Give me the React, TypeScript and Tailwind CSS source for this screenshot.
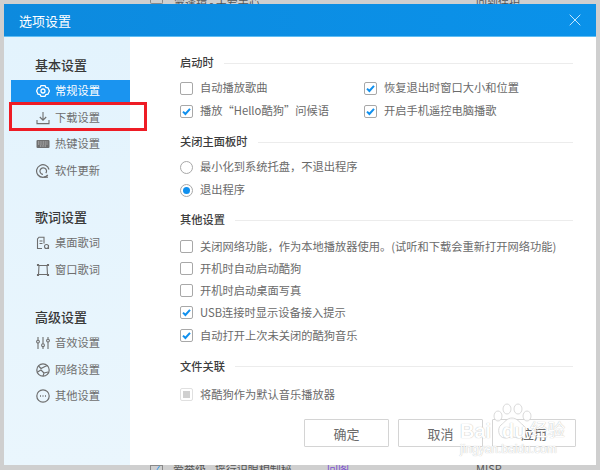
import React from "react";

const font = { fontFamily: '"Noto Sans CJK SC", "Noto Sans", sans-serif' };

function Check({ on, disabled }: { on?: boolean; disabled?: boolean }) {
  return (
    <span className={`flex h-[13px] w-[13px] shrink-0 items-center justify-center rounded-[2px] border bg-white ${disabled ? "border-[#e0e0e0]" : "border-[#a8a8a8]"}`}>
      {on && (
        <svg width="11" height="11" viewBox="0 0 11 11" fill="none">
          <path d="M2 5.6 4.4 8 9 2.8" stroke="#1090ee" strokeWidth="2" />
        </svg>
      )}
      {disabled && <span className="h-[7px] w-[7px] bg-[#d0d0d0]" />}
    </span>
  );
}

function Radio({ on }: { on?: boolean }) {
  return (
    <span className="flex h-[13px] w-[13px] shrink-0 items-center justify-center rounded-full border border-[#a8a8a8] bg-white">
      {on && <span className="h-[7px] w-[7px] rounded-full bg-[#1090ee]" />}
    </span>
  );
}

function Row({ box, label, h = "h-[22px]" }: { box: React.ReactNode; label: string; h?: string }) {
  return (
    <div className={`flex items-center gap-[7px] whitespace-nowrap ${h}`}>
      {box}
      <span className="text-[11.25px] leading-none text-[#6a6a6a]">{label}</span>
    </div>
  );
}

function Heading({ title, className = "" }: { title: string; className?: string }) {
  return (
    <div className={`flex h-[18px] items-center gap-[10px] ${className}`}>
      <span className="text-[11.25px] font-medium leading-none text-[#3d3d3d]">{title}</span>
      <span className="h-px flex-1 bg-[#ececec]" />
    </div>
  );
}

const stroke = { fill: "none", stroke: "currentColor", strokeWidth: 1.1 };

const icons: Record<string, React.ReactNode> = {
  gear: (
    <g {...stroke}>
      <path d="M5 1.6h4l.9 1.9 2.1.3 1.4 3.2-1.4 3.2-2.1.3-.9 1.9H5l-.9-1.9-2.1-.3L.6 7l1.4-3.2 2.1-.3z" strokeWidth="1.3" />
      <circle cx="7" cy="7" r="2" strokeWidth="1.3" />
    </g>
  ),
  download: (
    <g {...stroke}>
      <path d="M7 1v8M3.8 6 7 9.2 10.2 6M1 9v3.6h12V9" />
    </g>
  ),
  keyboard: (
    <g>
      <rect x="0.5" y="3" width="13" height="8" rx="1" fill="#6f6f6f" />
      <path d="M2 5h10M2 7h10M4 9h6" stroke="#d8d8d8" strokeWidth="0.8" strokeDasharray="1 .7" />
    </g>
  ),
  update: (
    <g {...stroke}>
      <path d="M11.8 11A6.3 6.3 0 1 1 13 5.5" strokeWidth="1.2" />
      <path d="M9.8 9.2A3.3 3.3 0 1 0 7 10.4" strokeWidth="1.2" />
      <path d="M8 13.2h4" strokeWidth="1.2" />
    </g>
  ),
  desk: (
    <g {...stroke}>
      <path d="M8 7.5V1.2H3L1.5 3v9.5h4.5" />
      <path d="M3.5 5h3M3.5 7.5h3" />
      <circle cx="10.5" cy="10.5" r="2" />
      <path d="M12.5 9v4" />
    </g>
  ),
  win: (
    <g {...stroke}>
      <path d="M2.5 2.5h9M2.5 11.5h9M3 2.5l-.5 9M11 2.5l.5 9" />
      <path d="M1.5 1.5h1v1h-1zM11.5 1.5h1v1h-1zM1.5 11.5h1v1h-1zM11.5 11.5h1v1h-1z" fill="currentColor" />
    </g>
  ),
  eq: (
    <g {...stroke}>
      <path d="M2 1v3.2M2 7v6M7 1v6.8M7 10.5V13M12 1v2.2M12 6v7" />
      <circle cx="2" cy="5.6" r="1.4" />
      <circle cx="7" cy="9.2" r="1.4" />
      <circle cx="12" cy="4.6" r="1.4" />
    </g>
  ),
  net: (
    <g {...stroke}>
      <circle cx="7" cy="7" r="6.2" strokeWidth="1.2" />
      <path d="M2.5 3 5 5.5 9 3.5l2.5-1M1.5 9l3.5-2 3 3-1 3.2M8 10l4-1" />
    </g>
  ),
  more: (
    <g {...stroke}>
      <circle cx="7" cy="7" r="6.2" strokeWidth="1.2" />
      <path d="M4 7h1M6.5 7h1M9 7h1" strokeWidth="1.4" />
    </g>
  ),
};

function NavItem({ icon, label, active }: { icon: string; label: string; active?: boolean }) {
  return (
    <div className={`flex h-[23px] items-center gap-[5px] pl-[25px] ${active ? "bg-[#1a94f0] text-white" : "text-[#6e6e6e]"}`}>
      <svg width="14" height="14" viewBox="0 0 14 14" className="shrink-0">{icons[icon]}</svg>
      <span className="text-[11.25px] leading-none">{label}</span>
    </div>
  );
}

function NavGroup({ title, children, className = "" }: { title: string; children: React.ReactNode; className?: string }) {
  return (
    <div className={className}>
      <div className="mb-[6.5px] flex h-[17px] items-center pl-[31px] text-[13px] font-medium leading-none text-[#383838]">{title}</div>
      <div className="ml-[7px] flex flex-col gap-[3.5px]">{children}</div>
    </div>
  );
}

function Btn({ label, w = "w-[85px]" }: { label: string; w?: string }) {
  return (
    <div className={`flex h-[28px] items-center justify-center rounded-[1px] border border-[#d4d4d4] bg-white text-[13px] leading-none text-[#6a6a6a] ${w}`}>
      {label}
    </div>
  );
}

export default function App() {
  return (
    <div style={font} className="relative flex h-[470px] w-[600px] items-start overflow-hidden bg-[#cfcfcf] pl-[4px] pt-[4px]">
      {/* window behind the dialog */}
      <div className="absolute left-[150px] top-0 h-[4px] w-[13px] rounded-b-[2px] border border-t-0 border-[#8a8a8a]" />
      <div className="absolute left-[174px] top-[-6px] text-[11px] text-[#555]">蒙逢镜 - 关爱手心</div>
      <div className="absolute left-[476px] top-[-6px] text-[11px] text-[#555]">回到保护</div>
      <div className="absolute left-[150px] bottom-[-3px] flex h-[8px] w-[13px] items-center justify-center border border-[#8a8a8a] text-[9px] leading-none text-[#1090ee]">✓</div>
      <div className="absolute left-[173px] bottom-[-7px] text-[11px] text-[#555]">爱举级 - 摇行识眼相制秘</div>
      <div className="absolute left-[327px] bottom-[-7px] text-[11px] text-[#7a4fd0]">回图</div>
      <div className="absolute left-[476px] bottom-[-6px] text-[11px] text-[#555]">MISP</div>

      {/* dialog */}
      <div className="relative flex h-[461px] w-[592px] flex-col bg-white">
        <div className="flex h-[33px] shrink-0 items-center justify-between border-b border-[#5fbdf3] bg-gradient-to-r from-[#0d8ade] to-[#0a92ea] px-[15px] text-white">
          <span className="text-[13px] leading-none">选项设置</span>
          <svg width="12" height="12" viewBox="0 0 12 12" fill="none" stroke="#d7efff" strokeWidth="0.9">
            <path d="M.7.7l10.6 10.6M11.3.7.7 11.3" />
          </svg>
        </div>
        <div className="flex min-h-0 flex-1">
          <aside className="w-[126px] shrink-0 bg-gradient-to-b from-[#e3f3fd] to-[#eaf6fd] pt-[19px]">
            <NavGroup title="基本设置">
              <NavItem icon="gear" label="常规设置" active />
              <NavItem icon="download" label="下载设置" />
              <NavItem icon="keyboard" label="热键设置" />
              <NavItem icon="update" label="软件更新" />
            </NavGroup>
            <NavGroup title="歌词设置" className="mt-[26px]">
              <NavItem icon="desk" label="桌面歌词" />
              <NavItem icon="win" label="窗口歌词" />
            </NavGroup>
            <NavGroup title="高级设置" className="mt-[27px]">
              <NavItem icon="eq" label="音效设置" />
              <NavItem icon="net" label="网络设置" />
              <NavItem icon="more" label="其他设置" />
            </NavGroup>
          </aside>
          <main className="flex-1 pl-[50px] pr-[23px] pt-[17px]">
            <Heading title="启动时" />
            <div className="mt-[5px] grid grid-cols-[184px_1fr] gap-y-px">
              <Row box={<Check />} label="自动播放歌曲" />
              <Row box={<Check on />} label="恢复退出时窗口大小和位置" />
              <Row box={<Check on />} label="播放“Hello酷狗”问候语" />
              <Row box={<Check on />} label="开启手机遥控电脑播歌" />
            </div>
            <Heading title="关闭主面板时" className="mt-[11px]" />
            <div className="mt-[5px] flex flex-col gap-px">
              <Row box={<Radio />} label="最小化到系统托盘，不退出程序" />
              <Row box={<Radio on />} label="退出程序" />
            </div>
            <Heading title="其他设置" className="mt-[10px]" />
            <div className="mt-[6px] flex flex-col">
              <Row h="h-[22.25px]" box={<Check />} label="关闭网络功能，作为本地播放器使用。(试听和下载会重新打开网络功能)" />
              <Row h="h-[22.25px]" box={<Check />} label="开机时自动启动酷狗" />
              <Row h="h-[22.25px]" box={<Check />} label="开机时启动桌面写真" />
              <Row h="h-[22.25px]" box={<Check on />} label="USB连接时显示设备接入提示" />
              <Row h="h-[22.25px]" box={<Check on />} label="自动打开上次未关闭的酷狗音乐" />
            </div>
            <Heading title="文件关联" className="mt-[11px]" />
            <div className="mt-[8px]">
              <Row box={<Check disabled />} label="将酷狗作为默认音乐播放器" />
            </div>
            <div className="-mr-[3px] mt-[14px] flex justify-end gap-[9px]">
              <Btn label="确定" />
              <Btn label="取消" />
              <Btn label="应用" w="w-[84px]" />
            </div>
          </main>
        </div>
      </div>

      {/* red annotation */}
      <div className="absolute left-[9px] top-[102px] h-[29px] w-[138px] border-[3px] border-[#ee1c25]" />

      {/* watermark */}
      <div className="absolute left-[458px] top-[403px] h-[52px] w-[112px] text-white [text-shadow:0_0_1px_#a8a8a8]">
        <svg width="44" height="38" viewBox="0 0 44 38" className="absolute left-[33px] top-0" fill="#ffffff" fillOpacity="0.85" stroke="#d0d0d0" strokeWidth="0.8">
          <ellipse cx="7" cy="13" rx="4" ry="5" />
          <ellipse cx="16" cy="6" rx="4" ry="5" />
          <ellipse cx="27" cy="6" rx="4" ry="5" />
          <ellipse cx="36" cy="13" rx="4" ry="5" />
          <path d="M21 15c5 0 7 4 11 7 4 3 3 13-4 13-3 0-4-1-7-1s-4 1-7 1c-7 0-8-10-4-13 4-3 6-7 11-7z" />
        </svg>
        <div style={{ fontFamily: '"Liberation Sans", sans-serif' }} className="absolute left-[2px] top-[18px] text-[20px] font-bold leading-none">Bai</div>
        <div style={{ fontFamily: '"Liberation Sans", sans-serif' }} className="absolute left-[44px] top-[18px] text-[20px] font-bold leading-none">du</div>
        <div className="absolute left-[72px] top-[17px] text-[17.5px] leading-none">经验</div>
        <div style={{ fontFamily: '"Liberation Sans", sans-serif' }} className="absolute left-[2px] top-[40px] whitespace-nowrap text-[12px] leading-none">jingyan.baidu.com</div>
      </div>
    </div>
  );
}
